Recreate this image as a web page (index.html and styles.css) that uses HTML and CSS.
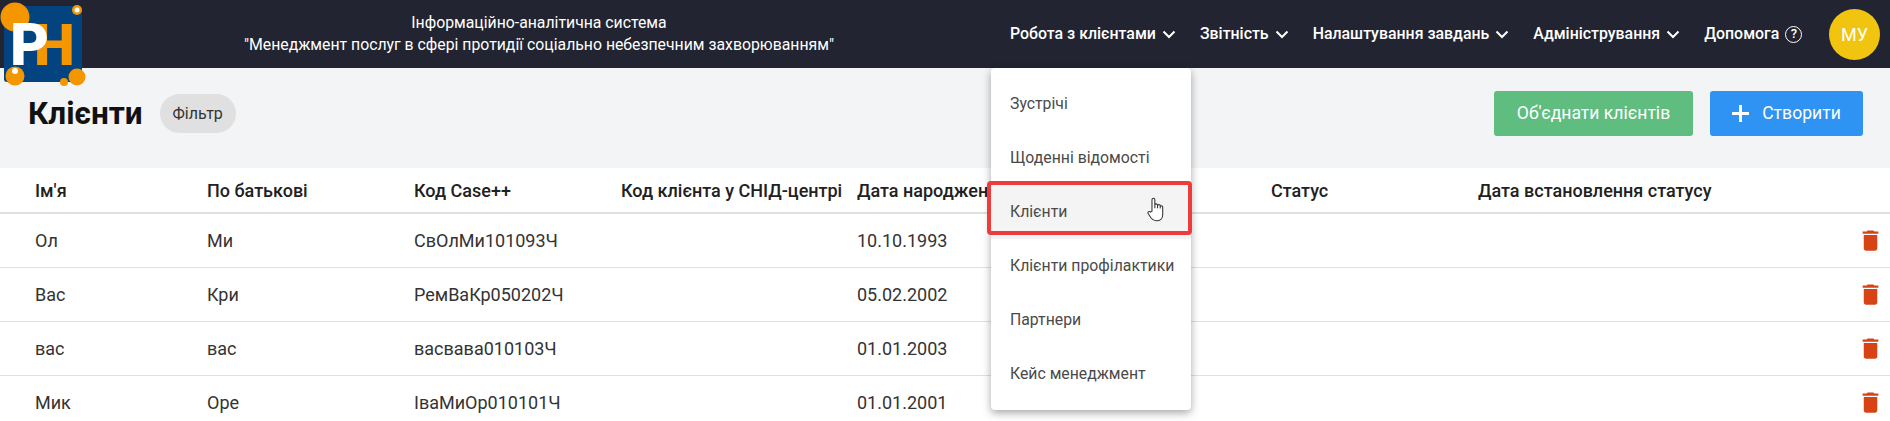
FILE: index.html
```html
<html>
<head>
    <title>Клієнти</title>
    <meta charset="utf-8">
    <link rel="stylesheet" href="styles.css">
</head>
<body>
    <svg class="logo" width="88" height="88" viewBox="0 0 88 88">
        <rect x="4" y="6" width="78" height="76" rx="3" fill="#03437f"/>
        <circle cx="15" cy="17" r="14.5" fill="#f39600"/>
        <circle cx="77" cy="10" r="5" fill="#f39600"/>
        <circle cx="77" cy="10" r="2.5" fill="#fff"/>
        <circle cx="15" cy="76" r="9.5" fill="#f39600"/>
        <circle cx="15" cy="71" r="3" fill="#fff"/>
        <circle cx="77" cy="77" r="8.5" fill="#f39600"/>
        <circle cx="64" cy="82" r="4" fill="#f39600"/>
        <text x="34" y="65" class="logo-h">H</text>
        <text x="10" y="65" class="logo-p">P</text>
    </svg>

    <header class="topbar">
        <div class="system-name">
            <div>Інформаційно-аналітична система</div>
            <div>"Менеджмент послуг в сфері протидії соціально небезпечним захворюванням"</div>
        </div>
        <nav class="nav">
            <div class="nav-item">
                Робота з клієнтами
                <svg class="chevron" width="14" height="9" viewBox="0 0 14 9"><path d="M1.5 1.5 7 7l5.5-5.5"/></svg>
                <div class="menu">
                    <div class="menu-item">Зустрічі</div>
                    <div class="menu-item">Щоденні відомості</div>
                    <div class="menu-item active">
                        Клієнти
                        <svg class="hand" width="18" height="25" viewBox="0 0 20 28">
                            <path d="M5.5 16V3a1.6 1.6 0 0 1 3.2 0v9.5V9.2a1.5 1.5 0 0 1 3 0v3.5V10a1.5 1.5 0 0 1 3 0v3V11.2a1.4 1.4 0 0 1 2.8 0V20c0 3.5-2.2 6.5-6 6.5H10c-2.5 0-4-1-5.500-3L1.200 18.500c-1-1.700 1.300-3 2.600-1.500z"/>
                        </svg>
                    </div>
                    <div class="menu-item">Клієнти профілактики</div>
                    <div class="menu-item">Партнери</div>
                    <div class="menu-item">Кейс менеджмент</div>
                </div>
            </div>
            <div class="nav-item">
                Звітність
                <svg class="chevron" width="14" height="9" viewBox="0 0 14 9"><path d="M1.5 1.5 7 7l5.5-5.5"/></svg>
            </div>
            <div class="nav-item">
                Налаштування завдань
                <svg class="chevron" width="14" height="9" viewBox="0 0 14 9"><path d="M1.5 1.5 7 7l5.5-5.5"/></svg>
            </div>
            <div class="nav-item">
                Адміністрування
                <svg class="chevron" width="14" height="9" viewBox="0 0 14 9"><path d="M1.5 1.5 7 7l5.5-5.5"/></svg>
            </div>
            <div class="nav-item">
                Допомога
                <span class="help">?</span>
            </div>
        </nav>
        <div class="avatar">МУ</div>
    </header>

    <section class="toolbar">
        <h1 class="page-title">Клієнти</h1>
        <div class="chip">Фільтр</div>
        <div class="spacer"></div>
        <div class="btn btn-green">Об'єднати клієнтів</div>
        <div class="btn btn-blue"><span class="plus"></span>Створити</div>
    </section>

    <table class="clients">
        <colgroup>
            <col class="col-wide"><col class="col-wide"><col class="col-wide"><col class="col-code">
            <col class="col-wide"><col class="col-wide"><col class="col-wide"><col class="col-wide"><col>
        </colgroup>
        <thead>
            <tr>
                <th>Ім'я</th>
                <th>По батькові</th>
                <th>Код Case++</th>
                <th>Код клієнта у СНІД-центрі</th>
                <th>Дата народження</th>
                <th></th>
                <th>Статус</th>
                <th>Дата встановлення статусу</th>
                <th></th>
            </tr>
        </thead>
        <tbody>
            <tr>
                <td>Ол</td><td>Ми</td><td>СвОлМи101093Ч</td><td></td><td>10.10.1993</td><td></td><td></td><td></td>
                <td class="actions"><svg class="trash" width="27" height="27" viewBox="0 0 24 24"><path d="M6 19c0 1.100.9 2 2 2h8c1.100 0 2-.9 2-2V7H6v12zM19 4h-3.500l-1-1h-5l-1 1H5v2h14V4z"/></svg></td>
            </tr>
            <tr>
                <td>Вас</td><td>Кри</td><td>РемВаКр050202Ч</td><td></td><td>05.02.2002</td><td></td><td></td><td></td>
                <td class="actions"><svg class="trash" width="27" height="27" viewBox="0 0 24 24"><path d="M6 19c0 1.100.9 2 2 2h8c1.100 0 2-.9 2-2V7H6v12zM19 4h-3.500l-1-1h-5l-1 1H5v2h14V4z"/></svg></td>
            </tr>
            <tr>
                <td>вас</td><td>вас</td><td>васвава010103Ч</td><td></td><td>01.01.2003</td><td></td><td></td><td></td>
                <td class="actions"><svg class="trash" width="27" height="27" viewBox="0 0 24 24"><path d="M6 19c0 1.100.9 2 2 2h8c1.100 0 2-.9 2-2V7H6v12zM19 4h-3.500l-1-1h-5l-1 1H5v2h14V4z"/></svg></td>
            </tr>
            <tr>
                <td>Мик</td><td>Оре</td><td>ІваМиОр010101Ч</td><td></td><td>01.01.2001</td><td></td><td></td><td></td>
                <td class="actions"><svg class="trash" width="27" height="27" viewBox="0 0 24 24"><path d="M6 19c0 1.100.9 2 2 2h8c1.100 0 2-.9 2-2V7H6v12zM19 4h-3.500l-1-1h-5l-1 1H5v2h14V4z"/></svg></td>
            </tr>
        </tbody>
    </table>
</body>
</html>
```

FILE: styles.css
```css
html {
    height: 100%;
    overflow: hidden;
}

body {
    margin: 0;
    background-color: #f3f4f6;
    font-family: "Roboto", "Liberation Sans", sans-serif;
    color: #212121;
    overflow: hidden;
}

.logo {
    position: absolute;
    left: 0;
    top: 0;
    z-index: 5;
}

.logo-p {
    font-family: "Roboto", sans-serif;
    font-weight: 900;
    font-size: 60px;
    fill: #fff;
}

.logo-h {
    font-family: "Roboto", sans-serif;
    font-weight: 900;
    font-size: 58px;
    fill: #f39600;
}

.topbar {
    display: flex;
    align-items: center;
    height: 68px;
    padding: 0 10px 0 243px;
    background-color: #222431;
    color: #fff;
}

.system-name {
    width: 592px;
    font-size: 15.8px;
    line-height: 22px;
    text-align: center;
    white-space: nowrap;
}

.nav {
    display: flex;
    align-items: center;
    gap: 24px;
    margin-left: 175px;
    font-size: 15.9px;
    line-height: 20px;
    font-weight: 500;
}

.nav-item {
    position: relative;
    display: flex;
    align-items: center;
    gap: 6px;
    white-space: nowrap;
}

.chevron {
    fill: none;
    stroke: #fff;
    stroke-width: 2;
}

.help {
    display: flex;
    align-items: center;
    justify-content: center;
    width: 15px;
    height: 15px;
    border: 1.5px solid #fff;
    border-radius: 50%;
    font-size: 13px;
    font-weight: 500;
}

.avatar {
    display: flex;
    align-items: center;
    justify-content: center;
    width: 51px;
    height: 51px;
    margin-left: auto;
    border-radius: 50%;
    background-color: #f1c40f;
    font-size: 18px;
}

.menu {
    position: absolute;
    left: -19px;
    top: 44px;
    z-index: 4;
    width: 200px;
    padding: 9px 0;
    background-color: #fff;
    border-radius: 4px;
    box-shadow: 0 3px 8px rgba(0, 0, 0, .35);
    color: #4a4a4a;
    font-size: 15.8px;
    font-weight: 400;
}

.menu-item {
    position: relative;
    display: flex;
    align-items: center;
    height: 54px;
    padding-left: 19px;
}

.menu-item.active {
    background-color: #f4f4f4;
}

.menu-item.active::after {
    content: "";
    position: absolute;
    left: -4px;
    right: -1px;
    top: -4px;
    bottom: 4px;
    border: 4px solid #ee3b3b;
    border-radius: 4px;
}

.hand {
    position: absolute;
    left: 156px;
    top: 12px;
    fill: #fff;
    stroke: #333;
    stroke-width: 1.2;
}

.toolbar {
    box-sizing: border-box;
    display: flex;
    align-items: center;
    height: 100px;
    padding: 0 27px 10px 28px;
}

.page-title {
    margin: 0 17px 0 0;
    font-size: 31.5px;
    font-weight: 700;
    color: #111;
}

.chip {
    display: flex;
    align-items: center;
    justify-content: center;
    width: 76px;
    height: 39px;
    border-radius: 20px;
    background-color: #e0e0e0;
    font-size: 16px;
    color: #333;
}

.spacer {
    flex: 1;
}

.btn {
    display: flex;
    align-items: center;
    justify-content: center;
    height: 45px;
    border-radius: 3px;
    color: #fff;
    font-size: 17.6px;
}

.btn-green {
    width: 199px;
    margin-right: 17px;
    background-color: #5fbd7f;
}

.btn-blue {
    width: 153px;
    background-color: #2f93f3;
}

.plus {
    width: 17px;
    height: 17px;
    margin-right: 13px;
    background:
        linear-gradient(#fff, #fff) center / 100% 3px no-repeat,
        linear-gradient(#fff, #fff) center / 3px 100% no-repeat;
}

.clients {
    width: 100%;
    table-layout: fixed;
    border-collapse: collapse;
    background-color: #fff;
    font-size: 18px;
}

.col-wide {
    width: 207px;
}

.col-code {
    width: 236px;
}

.clients th {
    height: 45px;
    padding: 0;
    text-align: left;
    font-weight: 500;
    color: #212121;
    white-space: nowrap;
    border-bottom: 2px solid #e0e0e0;
}

.clients td {
    height: 54px;
    padding: 0;
    color: #333;
    border-bottom: 1px solid #e0e0e0;
    white-space: nowrap;
}

.clients th:first-child,
.clients td:first-child {
    padding-left: 35px;
}

.clients .actions {
    text-align: right;
    padding-right: 6px;
    line-height: 0;
}

.trash {
    fill: #d84315;
}
```
